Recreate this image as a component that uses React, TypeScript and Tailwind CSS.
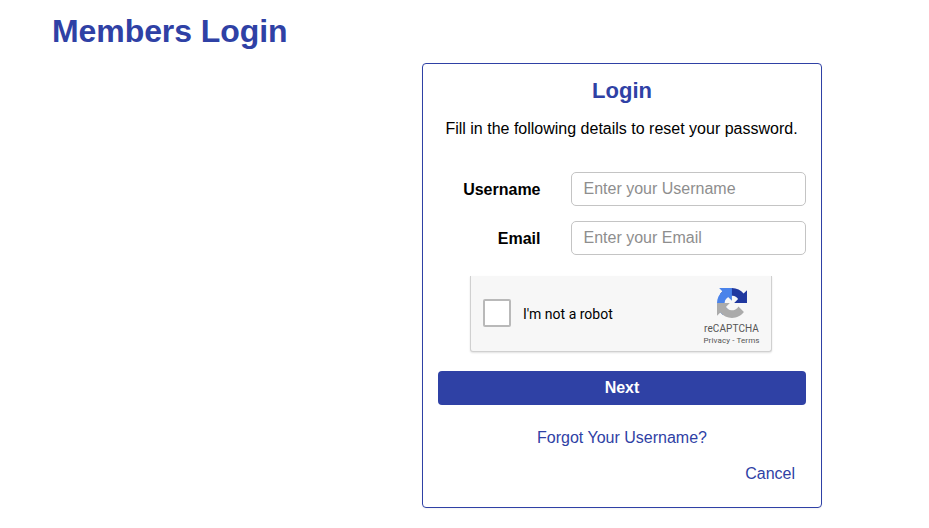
import React from "react";

const RecaptchaLogo = () => (
	<svg viewBox="0 0 64 64" className="h-[30px] w-[30px]" aria-hidden="true">
		<path
			fill="#20389f"
			d="M64 31.955l-.033-1.37V4.687l-7.16 7.16C50.948 4.674 42.033.093 32.05.093c-10.4 0-19.622 4.96-25.458 12.64l11.736 11.86a15.55 15.55 0 0 1 4.754-5.334c2.05-1.6 4.952-2.906 8.968-2.906.485 0 .86.057 1.135.163 4.976.393 9.288 3.14 11.828 7.124l-8.307 8.307L64 31.953"
		/>
		<path
			fill="#4a83ea"
			d="M31.862.094l-1.37.033H4.594l7.16 7.16C4.58 13.147 0 22.06 0 32.046c0 10.4 4.96 19.622 12.64 25.458L24.5 45.768a15.55 15.55 0 0 1-5.334-4.754c-1.6-2.05-2.906-4.952-2.906-8.968 0-.485.057-.86.163-1.135.393-4.976 3.14-9.288 7.124-11.828l8.307 8.307L31.86.095"
		/>
		<path
			fill="#ababab"
			d="M.001 32.045l.033 1.37v25.898l7.16-7.16c5.86 7.173 14.774 11.754 24.76 11.754 10.4 0 19.622-4.96 25.458-12.64l-11.736-11.86a15.55 15.55 0 0 1-4.754 5.334c-2.05 1.6-4.952 2.906-8.968 2.906-.485 0-.86-.057-1.135-.163-4.976-.393-9.288-3.14-11.828-7.124l8.307-8.307c-10.522.04-22.4.066-27.295-.005"
		/>
	</svg>
);

interface FieldProps {
	id: string;
	label: string;
	type?: string;
}

const Field = ({ id, label, type = "text" }: FieldProps) => (
	<div className="flex h-[34px] items-center">
		<label htmlFor={id} className="w-[102.5px] pt-px text-right font-bold">
			{label}
		</label>
		<input
			id={id}
			type={type}
			placeholder={`Enter your ${label}`}
			className="ml-[30.5px] h-[34px] w-[235px] rounded-[5px] border border-[#c4c4c4] bg-white px-[11.5px] pb-px pt-px placeholder:text-[#8e8e8e]"
		/>
	</div>
);

const Recaptcha = () => (
	<div className="flex h-[76px] w-[302px] justify-between rounded-b-[3px] border border-t-0 border-[#d0d0d0] bg-[#f7f7f7] font-['Roboto',sans-serif] shadow-[0_1px_2px_rgba(0,0,0,0.12)]">
		<label className="flex items-center pb-px pl-3 text-[14px]">
			<input
				type="checkbox"
				className="mr-3 h-7 w-7 appearance-none rounded-[2px] border-2 border-[#b9b9b9] bg-white"
			/>
			<span className="pt-px">I'm not a robot</span>
		</label>
		<div className="flex w-[79px] flex-col items-center pt-[12px] text-[#555]">
			<RecaptchaLogo />
			<div className="mt-[5px] text-[10px] leading-[12px] tracking-[0.1px]">
				reCAPTCHA
			</div>
			<div className="mt-px text-[8px] leading-[10px] tracking-[0.12px]">
				Privacy - Terms
			</div>
		</div>
	</div>
);

export default function App() {
	return (
		<main className="h-[528px] overflow-hidden bg-white font-['Liberation_Sans',Arial,sans-serif] text-[16px] leading-[22px] text-black">
			<h1 className="ml-[52px] h-[63px] pt-[12px] text-[32px] font-bold leading-[38px] tracking-[-0.08px] text-[#2f41a5]">
				Members Login
			</h1>
			<form className="ml-[422px] flex h-[445px] w-[400px] flex-col rounded-[4px] border border-[#2f41a5] px-[15px] shadow-[0_1px_2px_rgba(0,0,0,0.05)]">
				<h2 className="mt-[14px] text-center text-[22px] font-bold leading-[26px] text-[#2f41a5]">
					Login
				</h2>
				<p className="mt-[14px] whitespace-nowrap pr-px text-center">
					Fill in the following details to reset your password.
				</p>
				<div className="mt-[32px] flex flex-col gap-[15px]">
					<Field id="username" label="Username" />
					<Field id="email" label="Email" type="email" />
				</div>
				<div className="ml-[32px] mt-[21px]">
					<Recaptcha />
				</div>
				<button
					type="button"
					className="mt-[19px] h-[34px] w-full rounded-[4px] bg-[#2f41a5] pb-px font-bold text-white"
				>
					Next
				</button>
				<a href="#" className="mt-[22px] text-center text-[#2f41a5]">
					Forgot Your Username?
				</a>
				<a href="#" className="mr-[11px] mt-[14px] self-end text-[#2f41a5]">
					Cancel
				</a>
			</form>
		</main>
	);
}
